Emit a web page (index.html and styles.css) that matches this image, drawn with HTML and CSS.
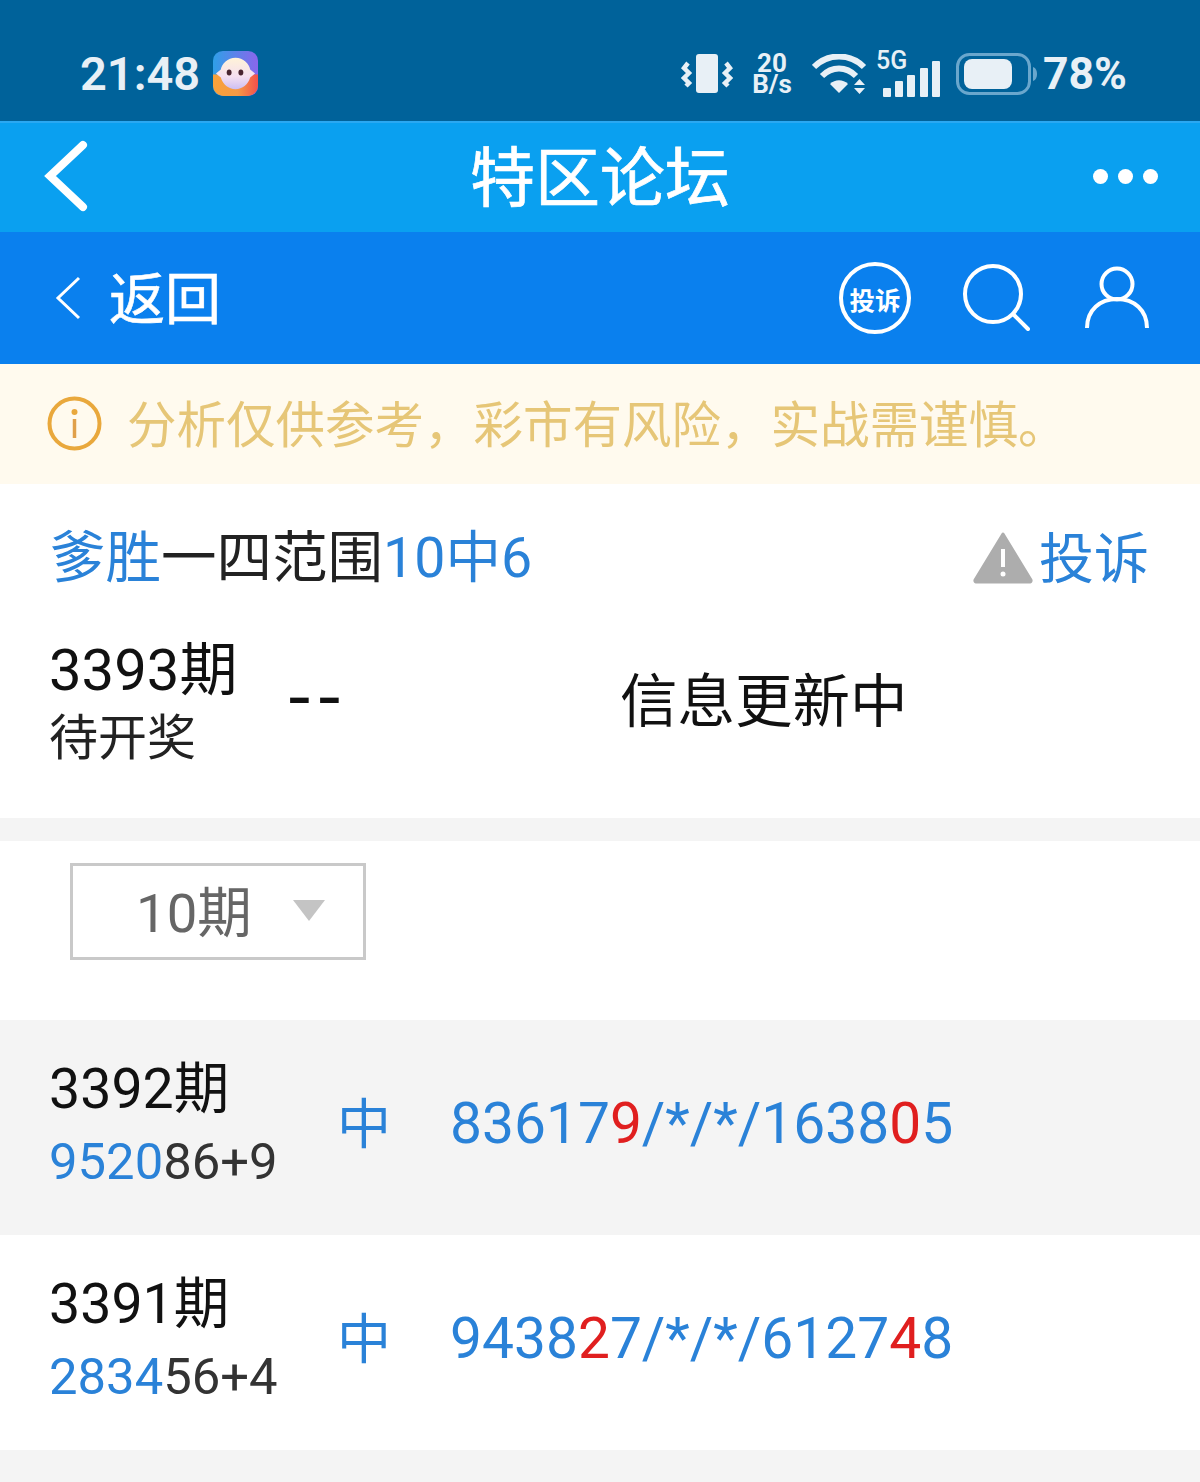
FILE: index.html
```html
<!DOCTYPE html>
<html lang="zh-CN">
<head>
<meta charset="utf-8">
<title>特区论坛</title>
<link rel="stylesheet" href="styles.css">
</head>
<body>
<div class="page">
  <header class="status">
    <div class="status-left">
      <span class="time">21:48</span>
      <svg class="app-icon" viewBox="0 0 46 46">
        <defs>
          <linearGradient id="ag" x1="0" y1="0" x2="1" y2="0"><stop offset="0" stop-color="#2f9fe8"/><stop offset="1" stop-color="#8a66ec"/></linearGradient>
          <linearGradient id="ag2" x1="0" y1="0" x2="1" y2="0"><stop offset="0" stop-color="#f8a23a"/><stop offset=".55" stop-color="#f69a45"/><stop offset="1" stop-color="#f2504c"/></linearGradient>
          <linearGradient id="face" x1="0" y1="0" x2="0" y2="1"><stop offset="0" stop-color="#fff3d8"/><stop offset=".6" stop-color="#f5dff0"/><stop offset="1" stop-color="#cdbff2"/></linearGradient>
        </defs>
        <rect width="46" height="46" rx="10" fill="url(#ag)"/>
        <path d="M0 24H46V35A11 11 0 0 1 35 46H11A11 11 0 0 1 0 35Z" fill="url(#ag2)"/>
        <path d="M23 7C31 7 37 13 38 19L43 23L38 27C36 34 30 39 23 39C16 39 10 34 8 27L3 23L8 19C9 13 15 7 23 7Z" fill="url(#face)"/>
        <ellipse cx="16.500" cy="22" rx="2.500" ry="3" fill="#4a2530"/>
        <ellipse cx="28.500" cy="22" rx="2.500" ry="3" fill="#4a2530"/>
      </svg>
    </div>
    <div class="status-right">
      <svg class="ic-vibrate" viewBox="0 0 52 40">
        <rect x="15" y="0" width="22" height="39" rx="3" fill="#e8f0f6"/>
        <path d="M7 9 3 14 8 19 3 24 8 29 5 32M45 9 49 14 44 19 49 24 44 29 47 32" fill="none" stroke="#e8f0f6" stroke-width="4.500"/>
      </svg>
      <div class="speed"><span>20</span><span>B/s</span></div>
      <svg class="ic-wifi" viewBox="0 0 56 40">
        <path d="M2 13C16 -1 38 -1 52 13" fill="none" stroke="#e8f0f6" stroke-width="6"/>
        <path d="M10 22C20 12 34 12 44 22" fill="none" stroke="#e8f0f6" stroke-width="6"/>
        <path d="M18 30C23 25 31 25 36 30L27 39Z" fill="#e8f0f6"/>
        <path d="M42 31h11l-5.500-6ZM42 34h11l-5.500 6Z" fill="#e8f0f6"/>
      </svg>
      <div class="signal">
        <span class="five-g">5G</span>
        <svg class="ic-bars" viewBox="0 0 58 36">
          <rect x="0" y="27" width="8" height="9" rx="1" fill="#e8f0f6"/>
          <rect x="12" y="20" width="8" height="16" rx="1" fill="#e8f0f6"/>
          <rect x="24" y="14" width="8" height="22" rx="1" fill="#e8f0f6"/>
          <rect x="37" y="7" width="8" height="29" rx="1" fill="#e8f0f6"/>
          <rect x="49" y="0" width="8" height="36" rx="1" fill="#e8f0f6"/>
        </svg>
      </div>
      <svg class="ic-battery" viewBox="0 0 82 42">
        <rect x="1.500" y="1.500" width="72" height="39" rx="12" fill="none" stroke="#6aa7cd" stroke-width="3"/>
        <rect x="8" y="6" width="48" height="30" rx="8" fill="#e8f0f6"/>
        <path d="M77 14c3 1 4 4 4 7s-1 6-4 7Z" fill="#6aa7cd"/>
      </svg>
      <span class="pct">78%</span>
    </div>
  </header>

  <nav class="topbar">
    <svg class="top-back" viewBox="0 0 48 74"><path d="M41 6 8 37 41 68" fill="none" stroke="#fff" stroke-width="8" stroke-linecap="round"/></svg>
    <h1 class="top-title">特区论坛</h1>
    <div class="dots"><i></i><i></i><i></i></div>
  </nav>

  <nav class="subbar">
    <div class="sub-back">
      <svg class="sub-chev" viewBox="0 0 30 46"><path d="M25 3 4 23 25 43" fill="none" stroke="#fff" stroke-width="3"/></svg>
      <span>返回</span>
    </div>
    <div class="sub-actions">
      <span class="badge">投诉</span>
      <svg class="ic-search" viewBox="0 0 68 68"><circle cx="31" cy="30" r="28" fill="none" stroke="#fff" stroke-width="4"/><path d="M51 50 66 65" stroke="#fff" stroke-width="4" stroke-linecap="round"/></svg>
      <svg class="ic-user" viewBox="0 0 64 64"><circle cx="32" cy="18" r="15.500" fill="none" stroke="#fff" stroke-width="4"/><path d="M2 62C2 44 15 33 32 33S62 44 62 62" fill="none" stroke="#fff" stroke-width="4"/></svg>
    </div>
  </nav>

  <section class="notice">
    <svg class="ic-info" viewBox="0 0 56 56"><circle cx="27.500" cy="27.500" r="25" fill="none" stroke="#e9a83c" stroke-width="4"/><circle cx="27.500" cy="16" r="3" fill="#e9a83c"/><path d="M27.500 23V42" stroke="#e0a04a" stroke-width="3.500"/></svg>
    <span class="notice-text">分析仅供参考，彩市有风险，实战需谨慎。</span>
  </section>

  <section class="head">
    <div class="head-top">
      <h2 class="head-title"><span class="blue">爹胜</span>一四范围<span class="blue">10中6</span></h2>
      <div class="report">
        <svg class="ic-warn" viewBox="0 0 60 52"><path d="M30 2 58 48a1.500 1.500 0 0 1-1 2H3a1.500 1.500 0 0 1-1-2Z" fill="#adadad" stroke="#adadad" stroke-width="3" stroke-linejoin="round"/><path d="M30 17V35" stroke="#fff" stroke-width="4"/><circle cx="30" cy="42" r="2.500" fill="#fff"/></svg>
        <span>投诉</span>
      </div>
    </div>
    <div class="current">
      <div class="current-issue">
        <div class="current-no">3393期</div>
        <div class="current-state">待开奖</div>
      </div>
      <div class="current-dash">--</div>
      <div class="current-info">信息更新中</div>
    </div>
  </section>

  <div class="gap"></div>

  <section class="filter">
    <div class="select">
      <span>10期</span>
      <i class="caret"></i>
    </div>
  </section>

  <section class="row row-gray">
    <div class="issue">
      <div class="issue-no">3392期</div>
      <div class="issue-code"><span class="blue">9520</span>86+9</div>
    </div>
    <div class="hit">中</div>
    <div class="nums">83617<span class="red">9</span>/*/*/1638<span class="red">0</span>5</div>
  </section>

  <section class="row">
    <div class="issue">
      <div class="issue-no">3391期</div>
      <div class="issue-code"><span class="blue">2834</span>56+4</div>
    </div>
    <div class="hit">中</div>
    <div class="nums">9438<span class="red">2</span>7/*/*/6127<span class="red">4</span>8</div>
  </section>

  <div class="tail"></div>
</div>
</body>
</html>
```
FILE: styles.css
```css
* { box-sizing: border-box; margin: 0; padding: 0; }
html, body { background: #fff; }
body { font-family: Roboto, "Noto Sans CJK SC", sans-serif; color: #111; }
.page { width: 1200px; height: 1482px; overflow: hidden; display: flex; flex-direction: column; }

.status { height: 121px; background: #00629a; display: flex; align-items: center; justify-content: space-between; padding: 26px 73px 0 80px; color: #e8f0f6; flex: none; }
.status-left { display: flex; align-items: center; gap: 13px; }
.time { font-size: 47px; font-weight: 600; line-height: 48px; }
.app-icon { width: 45px; height: 45px; display: block; }
.status-right { display: flex; align-items: center; }
.ic-vibrate { width: 52px; height: 40px; margin-right: 17px; }
.speed { display: flex; flex-direction: column; font-size: 26px; font-weight: 700; line-height: 21px; align-items: center; width: 44px; margin-right: 18px; }
.ic-wifi { width: 56px; height: 40px; margin-right: 12px; }
.signal { position: relative; width: 60px; height: 46px; margin-right: 16px; }
.five-g { position: absolute; left: -4px; top: -1px; font-size: 25px; font-weight: 500; line-height: 22px; }
.ic-bars { position: absolute; left: 3px; bottom: 0; width: 58px; height: 36px; }
.ic-battery { width: 82px; height: 42px; margin-right: 5px; }
.pct { font-size: 44.500px; font-weight: 700; line-height: 48px; }

.topbar { height: 111px; background: #0aa0f0; border-top: 2px solid #2aa8f2; display: flex; align-items: center; justify-content: space-between; padding: 0 42px; position: relative; flex: none; }
.top-back { width: 48px; height: 74px; display: block; margin-bottom: 3px; }
.top-title { font-size: 65px; font-weight: 400; -webkit-text-stroke: .7px #fff; color: #fff; line-height: 1; position: absolute; left: 0; right: 0; margin-top: 3px; text-align: center; }
.dots { display: flex; gap: 10px; margin-bottom: 2px; }
.dots i { width: 15px; height: 15px; border-radius: 50%; background: #fff; display: block; }

.subbar { height: 132px; background: #0a80ee; display: flex; align-items: center; justify-content: space-between; padding: 0 51px 0 54px; flex: none; color: #fff; }
.sub-back { display: flex; align-items: center; gap: 25px; font-size: 56px; font-weight: 400; -webkit-text-stroke: .6px #fff; line-height: 1; }
.sub-back span { margin-top: 4px; }
.sub-chev { width: 30px; height: 46px; display: block; }
.sub-actions { display: flex; align-items: center; }
.badge { width: 72px; height: 72px; border-radius: 50%; border: 4px solid #fff; font-size: 25.500px; font-weight: 700; display: flex; align-items: center; justify-content: center; white-space: nowrap; margin-right: 51px; }
.ic-search { width: 68px; height: 68px; margin-right: 55px; }
.ic-user { width: 64px; height: 64px; }

.notice { height: 120px; background: #fffaee; display: flex; align-items: center; padding: 0 0 0 47px; gap: 24px; color: #e6c677; font-size: 49.500px; flex: none; }
.notice-text { margin-bottom: 6px; }
.ic-info { width: 56px; height: 56px; display: block; flex: none; }

.blue { color: #2a82d8; }
.red { color: #e01f1f; }

.head { height: 334px; background: #fff; padding: 42px 51px 0 50px; flex: none; }
.head-top { display: flex; justify-content: space-between; align-items: center; height: 66px; }
.head-title { font-size: 55.500px; font-weight: 400; line-height: 66px; color: #222; }
.report { display: flex; align-items: center; gap: 6px; color: #2a82d8; font-size: 55px; line-height: 66px; }
.ic-warn { width: 60px; height: 52px; display: block; margin-bottom: 2px; }
.current { display: flex; align-items: center; margin: 42px 0 0 -1px; }
.current-issue { width: 240px; }
.current-no { font-size: 58px; line-height: 72px; color: #111; }
.current-state { font-size: 49px; line-height: 66px; color: #222; }
.current-dash { width: 331px; font-family: "Liberation Mono", monospace; font-size: 68px; font-weight: 400; letter-spacing: -10.800px; line-height: 72px; padding-bottom: 4px; text-indent: -10px; }
.current-info { font-size: 57.500px; line-height: 72px; color: #111; }

.gap { height: 23px; background: #f4f4f4; flex: none; }

.filter { height: 179px; background: #fff; padding: 22px 0 0 70px; flex: none; }
.select { width: 296px; height: 97px; border: 3px solid #c9c9c9; display: flex; align-items: center; padding: 0 0 7px 63px; color: #666; font-size: 54.500px; }
.caret { margin: 5px 0 0 41px; width: 0; height: 0; border-left: 16px solid transparent; border-right: 16px solid transparent; border-top: 21px solid #c4c4c4; display: block; }

.row { height: 215px; background: #fff; display: flex; align-items: center; padding: 0 0 4px 49px; flex: none; }
.row-gray { background: #f4f4f4; }
.issue { width: 288px; flex: none; }
.issue-no { font-size: 55.500px; line-height: 72px; color: #111; }
.issue-code { font-size: 50.800px; line-height: 72px; color: #333; }
.hit { width: 113px; font-size: 54px; color: #2a82d8; flex: none; padding-bottom: 10px; }
.nums { font-size: 56.900px; color: #2a82d8; white-space: nowrap; padding-bottom: 4px; }

.tail { flex: 1; background: #f4f4f4; }
```
